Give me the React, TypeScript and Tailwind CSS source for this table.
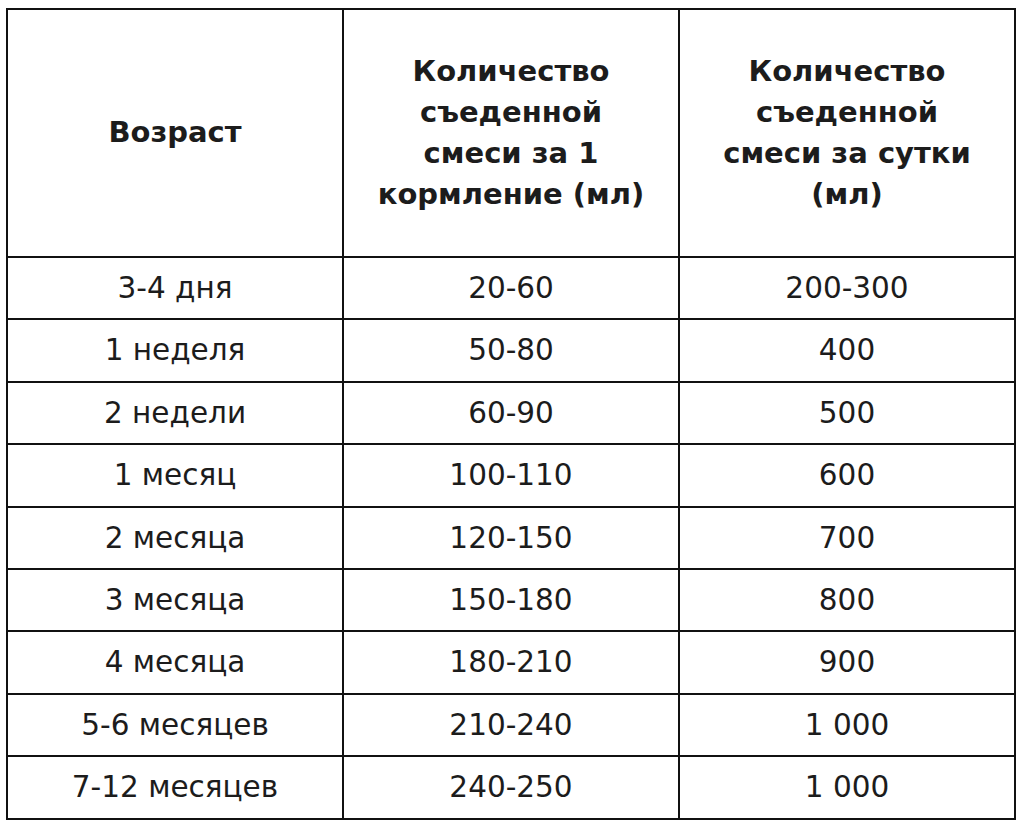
import React from "react";

const rows = [
  ["3-4 дня", "20-60", "200-300"],
  ["1 неделя", "50-80", "400"],
  ["2 недели", "60-90", "500"],
  ["1 месяц", "100-110", "600"],
  ["2 месяца", "120-150", "700"],
  ["3 месяца", "150-180", "800"],
  ["4 месяца", "180-210", "900"],
  ["5-6 месяцев", "210-240", "1 000"],
  ["7-12 месяцев", "240-250", "1 000"],
];

const App = () => {
  return (
    <div className="w-[1024px] h-[828px] bg-white pt-2 pl-[6px] font-['DejaVu_Sans',sans-serif] text-[#1c1c1c]">
      <table className="w-[1010px] border-collapse border-2 border-[#111] table-fixed">
        <thead>
          <tr className="h-[248px]">
            <th className="w-[336px] border-2 border-[#111] text-[29px] font-bold">Возраст</th>
            <th className="w-[336px] border-2 border-[#111] text-[29px] font-bold leading-[41px]">
              Количество
              <br />
              съеденной
              <br />
              смеси за 1
              <br />
              кормление (мл)
            </th>
            <th className="border-2 border-[#111] text-[29px] font-bold leading-[41px]">
              Количество
              <br />
              съеденной
              <br />
              смеси за сутки
              <br />
              (мл)
            </th>
          </tr>
        </thead>
        <tbody>
          {rows.map((row, i) => (
            <tr key={i} className="h-[62.4px]">
              {row.map((cell, j) => (
                <td key={j} className="border-2 border-[#111] text-center text-[29.5px] font-normal">
                  {cell}
                </td>
              ))}
            </tr>
          ))}
        </tbody>
      </table>
    </div>
  );
};

export default App;
